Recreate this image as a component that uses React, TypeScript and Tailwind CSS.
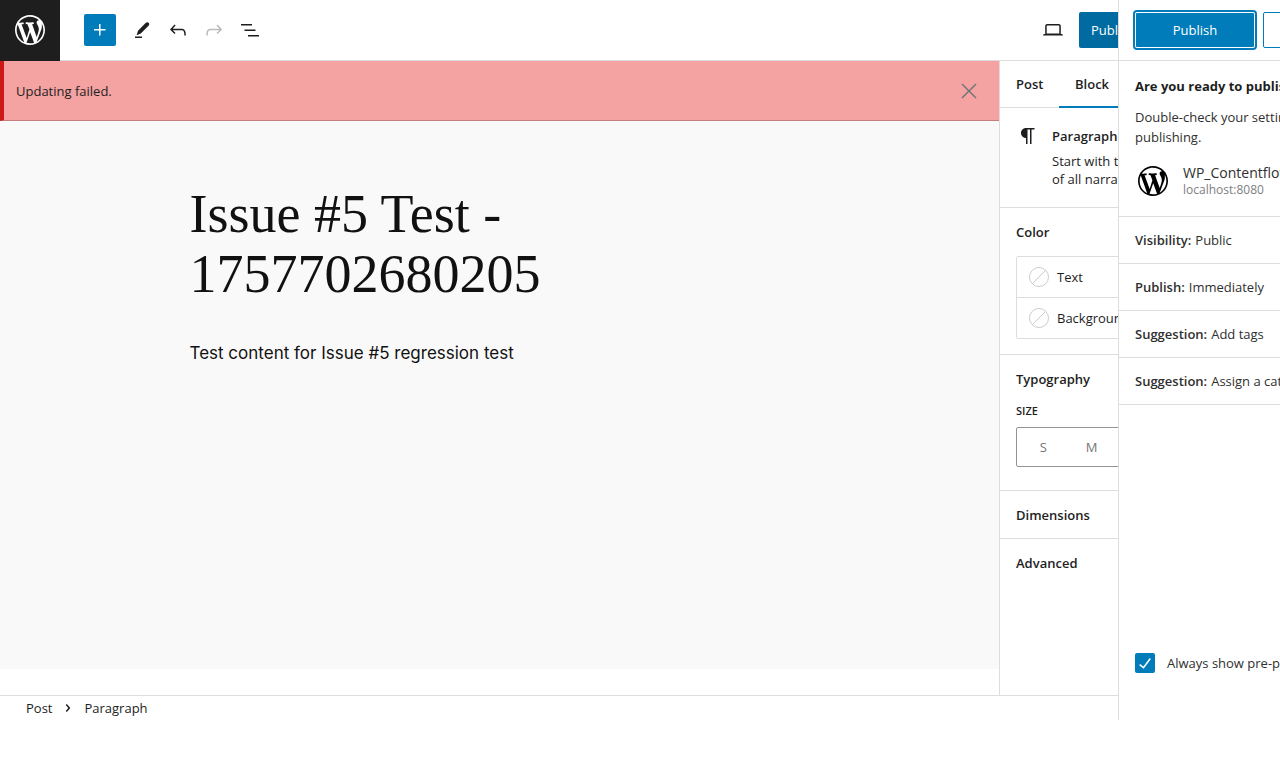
import type { ReactNode } from 'react';
import clsx from 'clsx';

const paths = {
  wordpress:
    'M20 10c0-5.51-4.49-10-10-10C4.48 0 0 4.49 0 10c0 5.52 4.48 10 10 10 5.51 0 10-4.48 10-10zM7.78 15.37L4.37 6.22c.55-.02 1.17-.08 1.17-.08.5-.06.44-1.13-.06-1.11 0 0-1.45.11-2.37.11-.18 0-.37 0-.58-.01C4.12 2.69 6.87 1.11 10 1.11c2.33 0 4.45.87 6.05 2.34-.68-.11-1.65.39-1.65 1.58 0 .74.45 1.36.9 2.1.35.61.55 1.36.55 2.46 0 1.49-1.4 5-1.4 5l-3.03-8.37c.54-.02.82-.17.82-.17.5-.05.44-1.25-.06-1.22 0 0-1.44.12-2.38.12-.87 0-2.33-.12-2.33-.12-.5-.03-.56 1.2-.06 1.22l.92.08 1.26 3.41zM17.41 10c.24-.64.74-1.87.43-4.25.7 1.29 1.05 2.71 1.05 4.25 0 3.29-1.73 6.24-4.4 7.78.97-2.59 1.94-5.2 2.92-7.78zM6.1 18.09C3.12 16.65 1.11 13.53 1.11 10c0-1.3.23-2.48.72-3.59C3.25 10.3 4.67 14.2 6.1 18.09zm4.03-6.63l2.58 6.98c-.86.29-1.76.45-2.71.45-.79 0-1.57-.11-2.29-.33.81-2.38 1.62-4.74 2.42-7.1z',
  plus: 'M11 12.5V17.5H12.5V12.5H17.5V11H12.5V6H11V11H6V12.5H11Z',
  pencil: 'M15.6 4.9c1.1-1 2.2-1 3-.1.9.9.9 2-.1 3L10.8 15.6 6.6 17.2 8 12.8ZM12 18.5v1.5H5v-1.5Z',
  undo: 'M18.3 11.7c-.6-.6-1.4-.9-2.3-.9H6.7l2.9-3.3-1.1-1-4.5 5L8.5 16l1-1-2.7-2.7H16c.5 0 .9.2 1.3.5 1 1 1 3.4 1 4.5v.3h1.5v-.2c0-1.5 0-4.3-1.5-5.7z',
  redo: 'M15.6 6.5l-1.1 1 2.9 3.3H8c-.9 0-1.7.3-2.3.9-1.4 1.5-1.4 4.2-1.4 5.6v.2h1.5v-.3c0-1.1 0-3.5 1-4.5.3-.3.7-.5 1.3-.5h9.2L14.5 15l1.1 1.1 4.6-4.6-4.6-5z',
  listView: 'M3 6h11v1.5H3V6Zm3.5 5.5h11V13h-11v-1.5ZM21 17H10v1.5h11V17Z',
  desktop:
    'M20.5 16h-.7V8c0-1.1-.9-2-2-2H6.2c-1.1 0-2 .9-2 2v8h-.7c-.8 0-1.5.7-1.5 1.5h20c0-.8-.7-1.5-1.5-1.5zM5.7 8c0-.3.2-.5.5-.5h11.6c.3 0 .5.2.5.5v7.6H5.7V8z',
  paragraph:
    'm9.99609 14v-.2251l.00391.0001v6.225h1.5v-14.5h2.5v14.5h1.5v-14.5h3v-1.5h-8.50391c-2.76142 0-5 2.23858-5 5 0 2.7614 2.23858 5 5 5z',
  close:
    'm13.06 12 6.47-6.47-1.06-1.06L12 10.94 5.53 4.47 4.47 5.53 10.94 12l-6.47 6.47 1.06 1.06L12 13.06l6.47 6.47 1.06-1.06L13.06 12Z',
  chevron:
    'M10.8622 8.04053L14.2805 12.0286L10.8622 16.0167L9.72327 15.0405L12.3049 12.0286L9.72327 9.01672L10.8622 8.04053Z',
  check: 'M16.7 7.1l-6.3 8.5-3.3-2.5-.9 1.2 4.5 3.4L17.9 8z',
};

function Icon({ name, className = 'size-6' }: { name: keyof typeof paths; className?: string }) {
  return (
    <svg
      viewBox={name === 'wordpress' ? '-2 -2 24 24' : '0 0 24 24'}
      className={clsx('shrink-0 fill-current', className)}
      aria-hidden="true"
    >
      <path d={paths[name]} />
    </svg>
  );
}

function ToolButton({ name, label, disabled }: { name: keyof typeof paths; label: string; disabled?: boolean }) {
  return (
    <button
      type="button"
      aria-label={label}
      disabled={disabled}
      className="flex size-9 items-center justify-center disabled:text-[#bbbbbb]"
    >
      <Icon name={name} />
    </button>
  );
}

function Header() {
  return (
    <header className="flex h-[61px] items-center border-b border-[#dddddd]">
      <a href="#posts" aria-label="View Posts" className="flex h-[61px] w-[60px] items-center justify-center bg-[#1e1e1e] text-white">
        <Icon name="wordpress" className="size-9" />
      </a>
      <button
        type="button"
        aria-label="Toggle block inserter"
        className="ml-6 mr-2 flex size-8 items-center justify-center rounded-xs bg-[#007cba] text-white"
      >
        <Icon name="plus" />
      </button>
      <ToolButton name="pencil" label="Tools" />
      <ToolButton name="undo" label="Undo" />
      <ToolButton name="redo" label="Redo" disabled />
      <ToolButton name="listView" label="Document Overview" />
      <div className="ml-auto flex items-center gap-2">
        <ToolButton name="desktop" label="View" />
        <button type="button" className="h-9 w-[201px] rounded-xs bg-[#006ba1] px-3 text-left text-white">
          Publish
        </button>
      </div>
    </header>
  );
}

function Notice() {
  return (
    <div role="alert" className="flex h-[60px] items-center border-b border-l-4 border-b-[#c27f7f] border-l-[#cc1818] bg-[#f4a2a2] pl-3 pr-3">
      <p className="grow">Updating failed.</p>
      <button type="button" aria-label="Close" className="flex size-9 items-center justify-center text-[#757575]">
        <Icon name="close" />
      </button>
    </div>
  );
}

function Section({ title, className, children }: { title: string; className?: string; children?: ReactNode }) {
  return (
    <section className={clsx('px-4', className)}>
      <h2 className="flex h-[47px] items-center font-semibold">{title}</h2>
      {children && <div className="pt-px">{children}</div>}
    </section>
  );
}

function ColorRow({ label }: { label: string }) {
  return (
    <li>
      <button type="button" className="flex h-10 w-full items-center gap-2 px-3">
        <svg viewBox="0 0 20 20" className="size-5 fill-none stroke-[#cccccc]" aria-hidden="true">
          <circle cx="10" cy="10" r="9.5" />
          <path d="M3.3 16.7 16.7 3.3" />
        </svg>
        {label}
      </button>
    </li>
  );
}

function Sidebar() {
  return (
    <aside className="w-[281px] shrink-0 border-l border-[#dddddd] bg-white">
      <div role="tablist" className="flex h-[47px] border-b border-[#dddddd] font-semibold">
        <button type="button" role="tab" aria-selected="false" className="w-[59px] pl-4 text-left">
          Post
        </button>
        <button type="button" role="tab" aria-selected="true" className="-mb-px border-b-2 border-[#007cba] px-4">
          Block
        </button>
      </div>
      <div className="flex h-[100px] gap-3 border-b border-[#dddddd] px-4 pt-4">
        <Icon name="paragraph" />
        <div className="grow">
          <h2 className="pb-1 font-semibold leading-6">Paragraph</h2>
          <p className="whitespace-nowrap leading-[18px]">
            Start with the basic building block
            <br />
            of all narrative.
          </p>
        </div>
      </div>
      <Section title="Color" className="border-b border-[#dddddd] pb-[15px]">
        <ul className="divide-y divide-[#dddddd] rounded-xs border border-[#dddddd]">
          <ColorRow label="Text" />
          <ColorRow label="Background" />
        </ul>
      </Section>
      <Section title="Typography" className="border-b border-[#dddddd] pb-[23px]">
        <fieldset>
          <legend className="pb-2 text-[11px] font-semibold uppercase leading-4">Size</legend>
          <div className="grid h-10 grid-cols-5 rounded-xs border border-[#949494] px-[2px] text-[#757575]">
            {['S', 'M', 'L', 'XL', 'XXL'].map((size) => (
              <button type="button" key={size}>
                {size}
              </button>
            ))}
          </div>
        </fieldset>
      </Section>
      <Section title="Dimensions" className="border-b border-[#dddddd]" />
      <Section title="Advanced" />
    </aside>
  );
}

const prepublishRows = [
  ['Visibility:', 'Public'],
  ['Publish:', 'Immediately'],
  ['Suggestion:', 'Add tags'],
  ['Suggestion:', 'Assign a category'],
];

function PublishPanel() {
  return (
    <section
      aria-label="Editor publish"
      className="absolute inset-y-0 -right-[121px] flex w-[283px] flex-col border-l border-[#dddddd] bg-white text-[#2f2f2f]"
    >
      <div className="flex h-[61px] items-center gap-2 border-b border-[#dddddd] px-4">
        <button
          type="button"
          className="h-9 flex-1 rounded-xs bg-[#007cba] text-white ring-2 ring-[#007cba] inset-ring inset-ring-white"
        >
          Publish
        </button>
        <button type="button" className="h-9 flex-1 rounded-xs border border-[#007cba] text-[#007cba]">
          Cancel
        </button>
      </div>
      <div className="whitespace-nowrap border-b border-[#dddddd] px-4 pb-[17px] pt-[15px]">
        <h2 className="font-bold leading-5 text-[#1e1e1e]">Are you ready to publish?</h2>
        <p className="pt-[11px] leading-5">
          Double-check your settings before
          <br />
          publishing.
        </p>
        <div className="flex items-center gap-3 pt-4">
          <Icon name="wordpress" className="size-9 text-black" />
          <div>
            <p className="text-sm leading-[18px]">WP_Contentflow</p>
            <p className="text-xs leading-4 text-[#808080]">localhost:8080</p>
          </div>
        </div>
      </div>
      {prepublishRows.map(([name, value]) => (
        <button
          type="button"
          key={value}
          className="flex h-[47px] items-center gap-1 whitespace-nowrap border-b border-[#dddddd] px-4"
        >
          <span className="font-semibold">{name}</span>
          <span>{value}</span>
        </button>
      ))}
      <label className="mt-auto flex items-center gap-3 whitespace-nowrap px-4 pb-[47px]">
        <span className="grid grid-cols-[20px] grid-rows-[20px] place-items-center">
          <input
            type="checkbox"
            defaultChecked
            className="col-start-1 row-start-1 size-5 appearance-none rounded-xs bg-[#007cba]"
          />
          <Icon name="check" className="pointer-events-none col-start-1 row-start-1 size-6 text-white" />
        </span>
        Always show pre-publish checks.
      </label>
    </section>
  );
}

export default function App() {
  return (
    <div className="relative overflow-hidden bg-white font-['Open_Sans','Noto_Sans',sans-serif] text-[13px] leading-5 text-[#1e1e1e]">
      <Header />
      <div className="flex">
        <main className="flex min-w-0 grow flex-col">
          <Notice />
          <article className="grow bg-[#f9f9f9] pb-[302px] pt-[63px] text-[#111111]">
            <div className="mx-auto max-w-[620px]">
              <h1 className="font-['Liberation_Serif',serif] text-[54px] leading-[60px]">
                Issue #5 Test - 1757702680205
              </h1>
              <p className="pt-[35px] font-['Inter',sans-serif] text-[17px] leading-7">
                Test content for Issue #5 regression test
              </p>
            </div>
          </article>
          <div className="h-[26px]" />
        </main>
        <Sidebar />
      </div>
      <nav aria-label="Block breadcrumb" className="flex h-[25px] items-center border-t border-[#dddddd] pl-[26px]">
        <a href="#post">Post</a>
        <Icon name="chevron" className="mx-1 size-6" />
        <span>Paragraph</span>
      </nav>
      <PublishPanel />
    </div>
  );
}
